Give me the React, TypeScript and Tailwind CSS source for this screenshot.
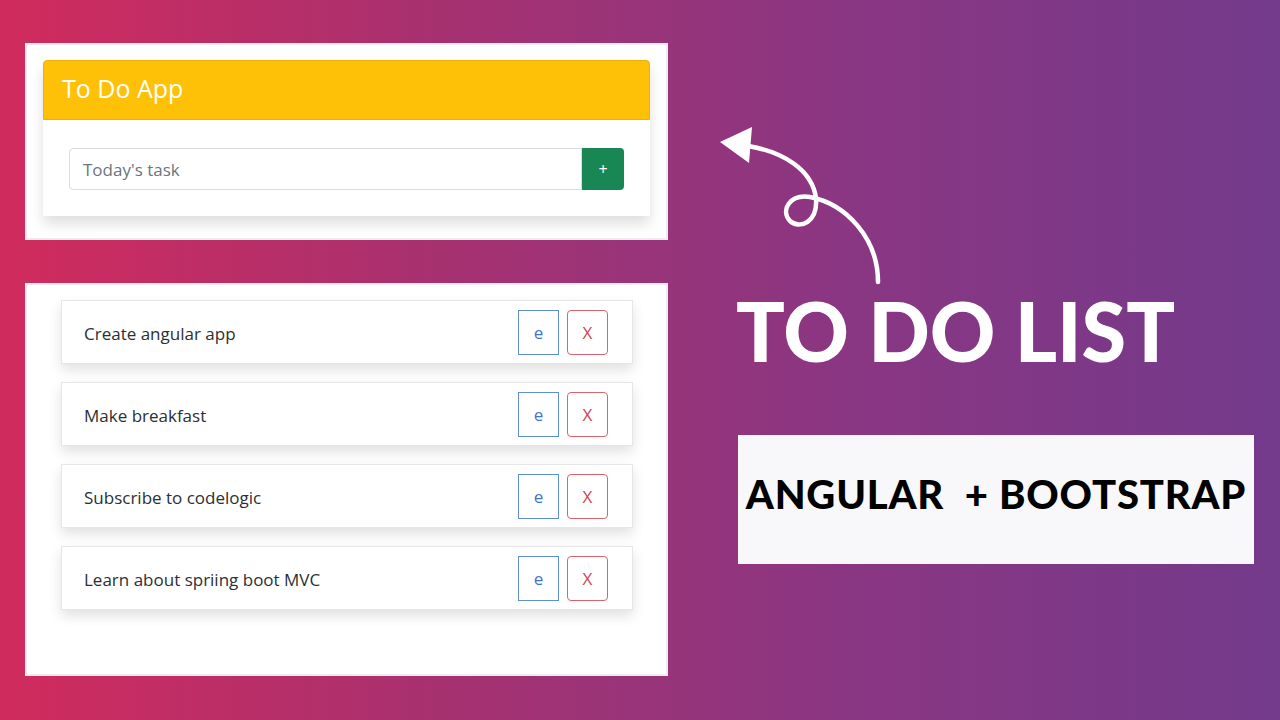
const tasks = [
  "Create angular app",
  "Make breakfast",
  "Subscribe to codelogic",
  "Learn about spriing boot MVC",
];

function LoopArrow() {
  return (
    <svg
      className="block"
      width={170}
      height={170}
      viewBox="712 120 170 170"
      fill="none"
      aria-hidden="true"
    >
      <path
        d="M 748 146 C 784 152, 812 170, 816 198 C 818 222, 800 230, 790 221 C 780 210, 790 194, 810 197 C 846 204, 878 238, 878 282"
        stroke="#fff"
        strokeWidth={4.5}
        strokeLinecap="round"
      />
      <polygon points="720,142 752,127 749,163" fill="#fff" />
    </svg>
  );
}

function TaskRow({ label }: { label: string }) {
  return (
    <div className="flex h-[64px] items-center justify-between border border-[#e6e6ea] bg-white pr-[24px] pl-[22px] shadow-[0_6px_12px_rgba(0,0,0,0.12)]">
      <span className="pt-[3px] text-[17px] text-[#2b2f33]">{label}</span>
      <div className="flex gap-[8px] pt-[1px]">
        <button
          type="button"
          className="h-[45px] w-[41px] border border-[#5d8fd8] text-[17px] text-[#3f74cf]"
        >
          e
        </button>
        <button
          type="button"
          className="h-[45px] w-[41px] rounded-[4px] border border-[#d9646f] text-[17px] text-[#d2424f]"
        >
          X
        </button>
      </div>
    </div>
  );
}

export default function App() {
  return (
    <div
      className="flex h-[720px] w-[1280px] overflow-hidden bg-[linear-gradient(90deg,#d12b5d_0%,#a63170_35%,#8b3682_65%,#733a8b_100%)]"
      style={{ fontFamily: '"Open Sans", "Noto Sans", sans-serif' }}
    >
      <div className="ml-[25px] flex w-[643px] flex-col gap-[43px] pt-[43px]">
        <div className="h-[197px] border-2 border-[#ececf1] bg-white pt-[15px] pl-[16px]">
          <div className="w-[607px] rounded-[4px] shadow-[0_8px_14px_rgba(0,0,0,0.13)]">
            <div className="flex h-[60px] items-center rounded-t-[4px] border border-[#e9b10a] bg-[#ffc107] pb-[3px] pl-[18px] text-[25px] font-medium text-white">
              To Do App
            </div>
            <div className="flex h-[96px] items-center bg-white px-[26px] pt-[2px]">
              <div className="flex h-[42px] w-full">
                <div className="flex flex-1 items-center rounded-l-[4px] border border-[#d9dce0] pt-[2px] pl-[13px] text-[17px] text-[#6c757d]">
                  Today's task
                </div>
                <button
                  type="button"
                  className="w-[42px] rounded-r-[4px] bg-[#198754] text-[16px] text-white"
                >
                  +
                </button>
              </div>
            </div>
          </div>
        </div>

        <div className="h-[393px] border-2 border-[#ececf1] bg-white pt-[15px] pl-[34px]">
          <div className="flex w-[572px] flex-col gap-[18px]">
            {tasks.map((task) => (
              <TaskRow key={task} label={task} />
            ))}
          </div>
        </div>
      </div>

      <div className="ml-[44px] flex flex-col pt-[120px]">
        <LoopArrow />
        <div
          className="ml-[24px] text-[81px] leading-[1] font-black tracking-[0] text-white"
          style={{ fontFamily: "Lato, sans-serif" }}
        >
          TO DO LIST
        </div>
        <div className="mt-[64px] ml-[26px] flex h-[129px] w-[516px] items-center justify-center bg-[#f8f8fb] pb-[12px]">
          <span
            className="text-[40px] font-black tracking-[0.02em] whitespace-pre text-black"
            style={{ fontFamily: "Lato, sans-serif" }}
          >
            ANGULAR  + BOOTSTRAP
          </span>
        </div>
      </div>
    </div>
  );
}
